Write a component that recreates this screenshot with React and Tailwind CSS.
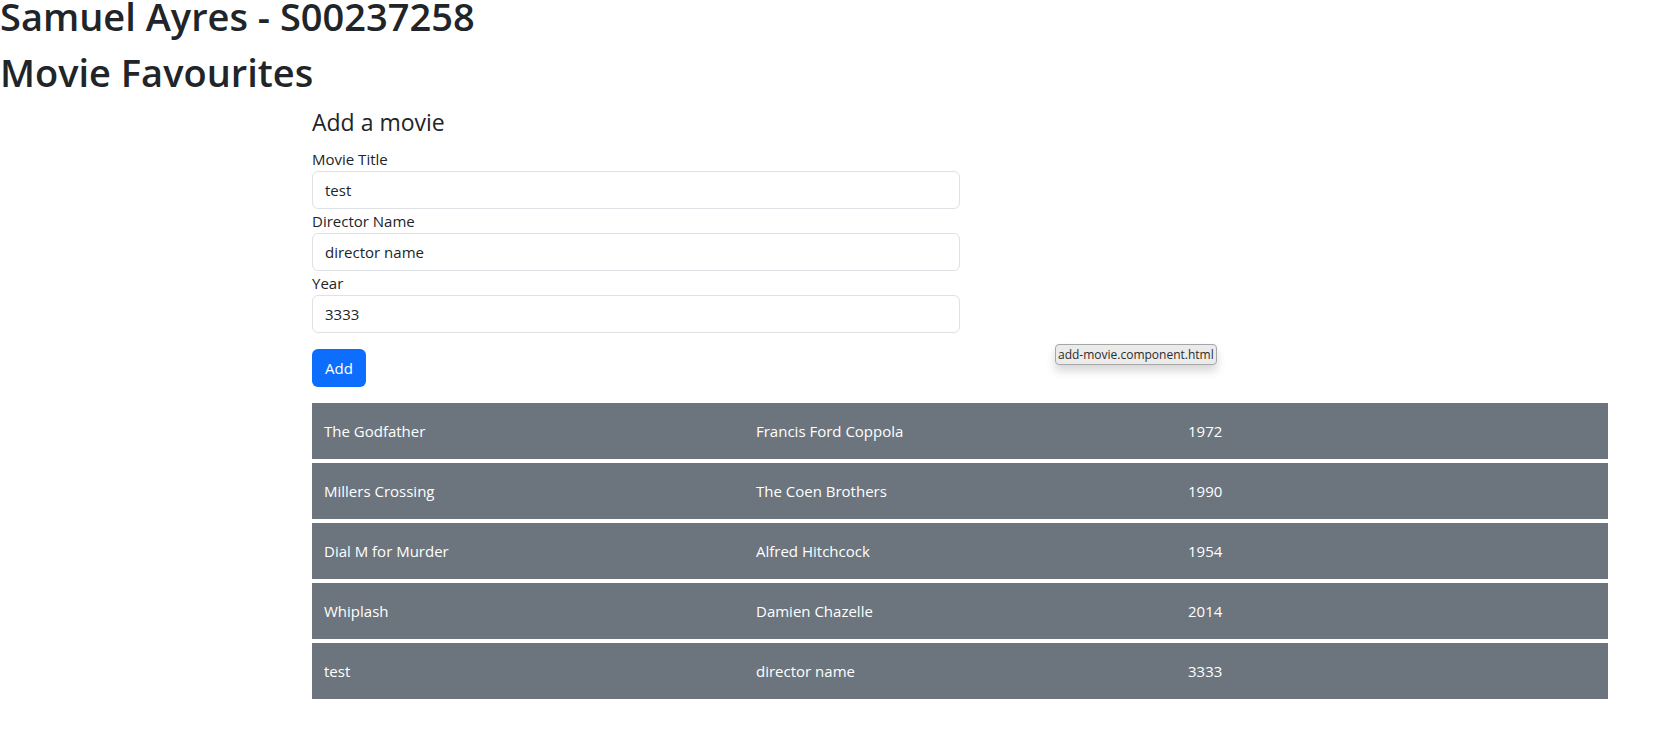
import { useState } from "react";

const initialMovies = [
  { title: "The Godfather", director: "Francis Ford Coppola", year: "1972" },
  { title: "Millers Crossing", director: "The Coen Brothers", year: "1990" },
  { title: "Dial M for Murder", director: "Alfred Hitchcock", year: "1954" },
  { title: "Whiplash", director: "Damien Chazelle", year: "2014" },
  { title: "test", director: "director name", year: "3333" },
];

function Field({ id, label, value, onChange }) {
  return (
    <div>
      <label htmlFor={id} className="block h-6 text-[15px] leading-6">
        {label}
      </label>
      <input
        id={id}
        type="text"
        value={value}
        onChange={(event) => onChange(event.target.value)}
        className="block h-[38px] w-full rounded-md border border-[#dee2e6] bg-white px-3 text-[15px] leading-6 outline-none focus:border-[#86b7fe]"
      />
    </div>
  );
}

function AddMovie({ onAdd }) {
  const [title, setTitle] = useState("test");
  const [director, setDirector] = useState("director name");
  const [year, setYear] = useState("3333");

  const submit = (event) => {
    event.preventDefault();
    onAdd({ title, director, year });
  };

  return (
    <section className="relative">
      <h4 className="mb-[11px] text-[23px] leading-7">Add a movie</h4>
      <form onSubmit={submit} className="w-1/2">
        <Field id="title" label="Movie Title" value={title} onChange={setTitle} />
        <Field id="director" label="Director Name" value={director} onChange={setDirector} />
        <Field id="year" label="Year" value={year} onChange={setYear} />
        <button
          type="submit"
          className="mt-4 block h-[38px] rounded-md bg-[#0d6efd] px-[13px] text-[15px] leading-6 text-white"
        >
          Add
        </button>
      </form>
      <div
        role="tooltip"
        className="absolute bottom-[22px] left-[743px] rounded border border-[#a6a6a6] bg-[#ebebeb] px-[2px] text-[12px] leading-[19px] whitespace-nowrap text-[#2b2b2b] shadow-[0_6px_10px_rgba(0,0,0,0.16)]"
      >
        add-movie.component.html
      </div>
    </section>
  );
}

function MovieList({ movies }) {
  return (
    <ul className="mt-4 flex flex-col gap-1">
      {movies.map((movie, index) => (
        <li
          key={index}
          className="grid h-14 grid-cols-3 items-center bg-[#6c757d] text-[15px] leading-6 text-white"
        >
          <span className="px-3">{movie.title}</span>
          <span className="px-3">{movie.director}</span>
          <span className="px-3">{movie.year}</span>
        </li>
      ))}
    </ul>
  );
}

export default function App() {
  const [movies, setMovies] = useState(initialMovies);

  return (
    <div className="flow-root bg-white font-['Open_Sans','Noto_Sans',sans-serif] text-[#212529]">
      <header className="-mt-2 flex flex-col gap-2 text-[38px] leading-12 font-semibold">
        <h1>Samuel Ayres - S00237258</h1>
        <h1>Movie Favourites</h1>
      </header>
      <main className="mt-3 pr-[54px] pb-12 pl-[312px]">
        <AddMovie onAdd={(movie) => setMovies([...movies, movie])} />
        <MovieList movies={movies} />
      </main>
    </div>
  );
}
